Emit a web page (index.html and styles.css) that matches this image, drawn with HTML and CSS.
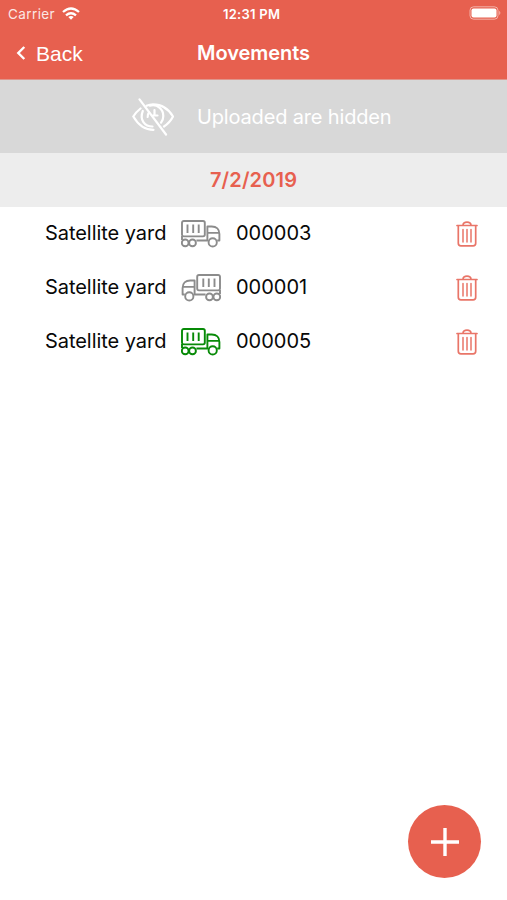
FILE: index.html
```html
<!DOCTYPE html>
<html lang="en">
<head>
<meta charset="utf-8">
<title>Movements</title>
<link rel="stylesheet" href="styles.css">
</head>
<body>
<svg width="0" height="0" class="defs" aria-hidden="true">
  <symbol id="truck" viewBox="0 0 40 28">
    <g fill="none" stroke="currentColor" stroke-width="1.9" stroke-linejoin="round">
      <rect x="1" y="1" width="22.8" height="15.4" rx="1.8"/>
      <path d="M6.500 4.500v8.600M12.200 4.500v8.600M17.700 4.500v8.600M1 16v4M15.400 20.500h12M26.400 20.500V6.500h4.400c4.600 0 7.600 3 7.600 7.400v6.600h-2.200M26.400 12.900h12"/>
      <circle cx="4.200" cy="22.900" r="3.400"/>
      <circle cx="11.500" cy="22.900" r="3.400"/>
      <circle cx="31.700" cy="22.400" r="4.100"/>
    </g>
  </symbol>
  <symbol id="trash" viewBox="0 0 22 26">
    <g fill="none" stroke="currentColor" stroke-width="1.700" stroke-linecap="round">
      <path d="M1 4.500h20M7 4.200c.2-2 1.300-3 4-3s3.800 1 4 3M2.300 4.800v17.400q0 2.600 2.600 2.600h12.200q2.600 0 2.600-2.600V4.800"/>
      <path d="M7 8.500v12.500M11 8.500v12.500M15 8.500v12.500" stroke-width="1.500"/>
    </g>
  </symbol>
</svg>
<header class="top">
  <div class="status">
    <span class="carrier">Carrier</span>
    <svg class="wifi" viewBox="0 0 18 13"><g fill="none" stroke="#fff" stroke-width="2.300"><path d="M1 5q8-7 16 0M4 8.300q5-4.200 10 0"/></g><path fill="#fff" d="M6.300 10q2.700-2 5.400 0L9 12.800z"/></svg>
    <span class="clock">12:31 PM</span>
    <svg class="battery" viewBox="0 0 33 14"><rect x="1" y=".8" width="28" height="12.400" rx="3.600" fill="none" stroke="#fff" stroke-opacity=".5"/><rect x="2.500" y="2.500" width="25" height="9" rx="2" fill="#fff"/><path d="M30.300 4.800q2 2.200 0 4.400z" fill="#fff" fill-opacity=".6"/></svg>
  </div>
  <nav class="nav">
    <a class="back"><svg class="chevron" viewBox="0 0 10 16"><path d="M8.300 2L2.300 8l6 6" fill="none" stroke="#fff" stroke-width="2.400"/></svg><span>Back</span></a>
    <h1>Movements</h1>
  </nav>
</header>
<section class="filter">
  <svg class="eye" viewBox="0 0 42 38"><g fill="none" stroke="#fff" stroke-width="2.200" stroke-linecap="round"><path d="M8.500 10.500Q4 14 1.300 18.500Q9 31.800 21.500 31.800M14.500 7.800Q18 6.300 21 6.300q13 0 20 12.200-3 6-9 10"/><path d="M10.800 13c-3.600 9 2 15.500 9.700 15.500M18 7.700c7.500-2 13.300 3.800 13.300 10.300 0 2.700-.8 4.900-2.300 6.700"/><path d="M17 14.500q-1.600 2-1.300 4.500M22.500 12v4.500M21 17.500h4.500"/><path d="M7.500 1.300l26.500 35.200"/></g></svg>
  <span class="label">Uploaded are hidden</span>
</section>
<h2 class="date">7/2/2019</h2>
<main class="list">
  <div class="row"><span class="place">Satellite yard</span><svg class="truck"><use href="#truck"/></svg><span class="number">000003</span><svg class="trash"><use href="#trash"/></svg></div>
  <div class="row"><span class="place">Satellite yard</span><svg class="truck inbound"><use href="#truck"/></svg><span class="number">000001</span><svg class="trash"><use href="#trash"/></svg></div>
  <div class="row"><span class="place">Satellite yard</span><svg class="truck active"><use href="#truck"/></svg><span class="number">000005</span><svg class="trash"><use href="#trash"/></svg></div>
</main>
<button class="add" aria-label="Add"><svg viewBox="0 0 30 30"><path d="M15 1v28M1 15h28" stroke="#fff" stroke-width="3.400"/></svg></button>
</body>
</html>
```
FILE: styles.css
```css
* { box-sizing: border-box; }
body { margin: 0; height: 900px; background: #fff; color: #080808; font-family: Inter, "Liberation Sans", sans-serif; overflow: hidden; }
.defs { position: absolute; }
svg { display: block; flex: none; }
.top { height: 80px; background: #e7604f; color: #fff; border-bottom: 1px solid #df958b; }
.status { height: 27px; display: grid; grid-template-columns: 54px 100px 1fr 32px; align-items: center; padding: 0 6px 0 8px; font-size: 13.500px; white-space: nowrap; }
.carrier { opacity: .85; letter-spacing: .4px; }
.wifi { width: 18px; height: 13px; }
.clock { font-weight: 600; font-size: 13px; padding-left: 61px; letter-spacing: .25px; }
.battery { width: 33px; height: 14px; position: relative; top: -1px; }
.nav { height: 52px; display: grid; grid-template-columns: 1fr auto 1fr; align-items: center; }
.back { display: flex; align-items: center; gap: 10px; padding-left: 16px; font: 21px "Liberation Sans", sans-serif; }
.back span { position: relative; top: 1px; }
.chevron { width: 10px; height: 16px; }
h1 { margin: 0; font-size: 20px; line-height: 24px; font-weight: 600; letter-spacing: -.05px; }
.filter { height: 73px; background: #d8d8d8; color: #fff; display: flex; align-items: center; gap: 23px; padding-left: 132px; font-size: 20px; }
.label { letter-spacing: -.16px; }
.eye { width: 42px; height: 38px; }
.date { height: 54px; margin: 0; background: #ededed; color: #e7604f; font-size: 20px; font-weight: 600; line-height: 54px; text-align: center; letter-spacing: .15px; }
.row { height: 54px; display: flex; align-items: center; padding: 0 29px 0 45px; font-size: 20px; white-space: nowrap; }
.place { width: 136px; letter-spacing: -.05px; padding-bottom: 2px; }
.truck { width: 40px; height: 28px; color: #8c8c8c; }
.inbound { transform: scaleX(-1); }
.active { color: #078a07; }
.number { margin-left: 15px; padding-bottom: 2px; }
.trash { width: 22px; height: 26px; margin-left: auto; color: #e97568; }
.add { position: absolute; left: 408px; top: 805px; width: 73px; height: 73px; padding: 0; border: 0; border-radius: 50%; background: #e7604f; display: grid; place-items: center; }
.add svg { width: 30px; height: 30px; }
```
